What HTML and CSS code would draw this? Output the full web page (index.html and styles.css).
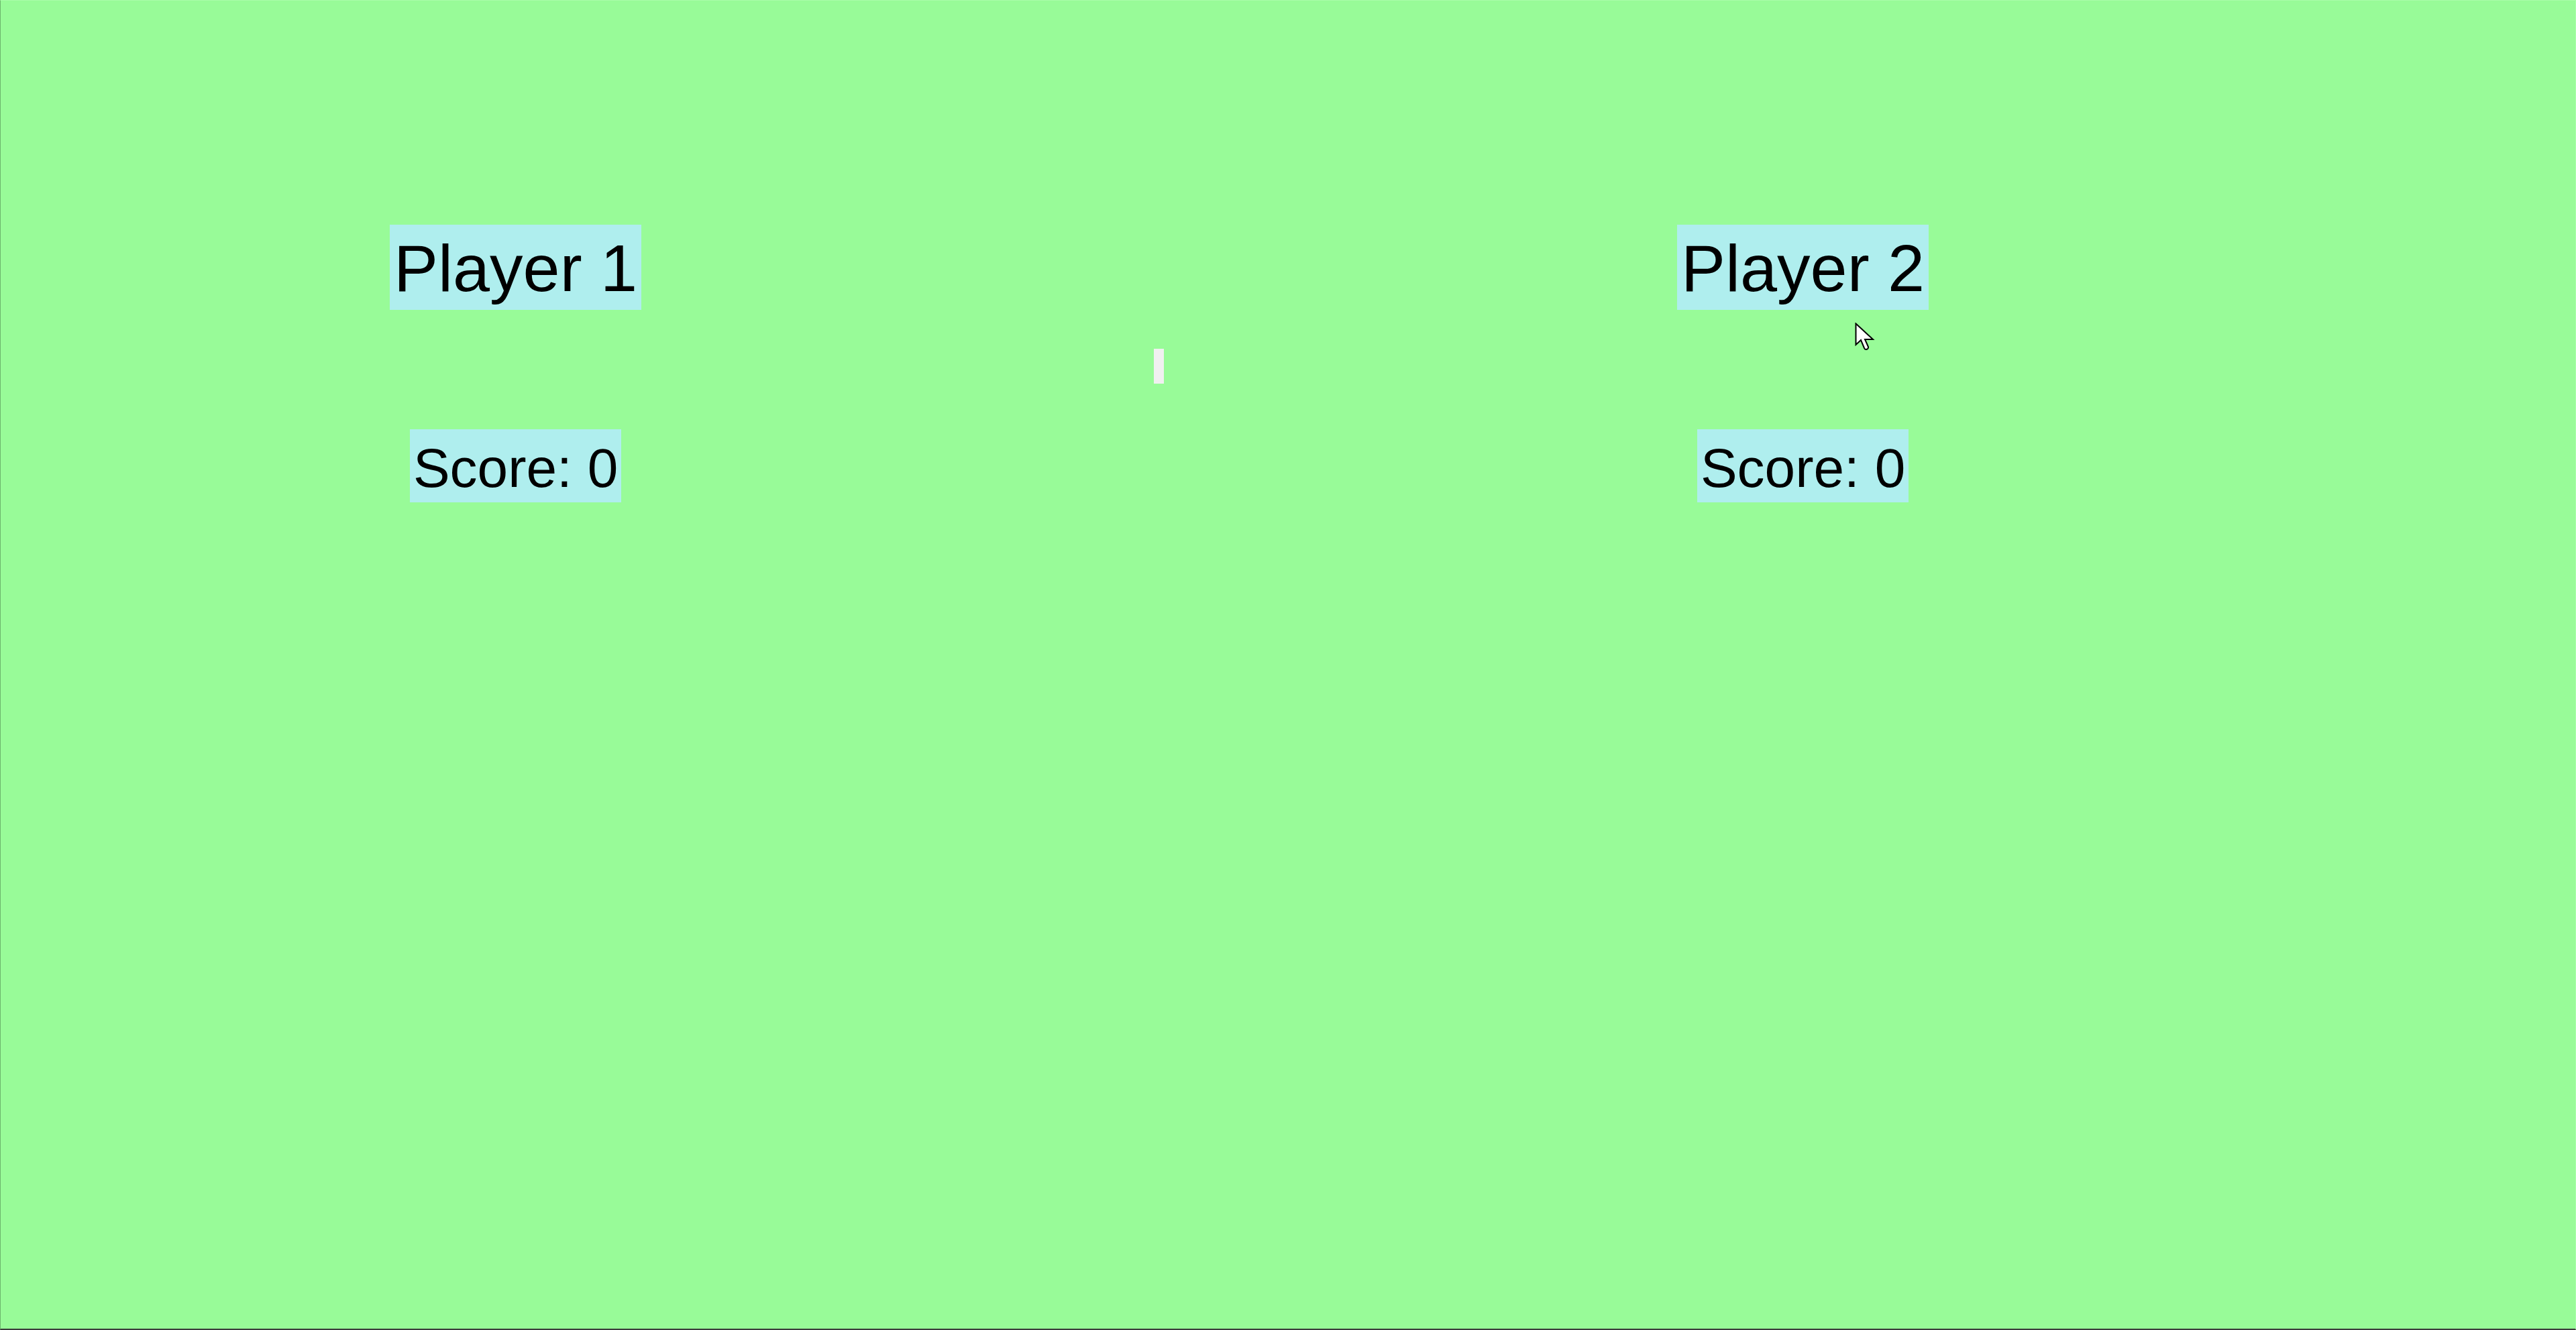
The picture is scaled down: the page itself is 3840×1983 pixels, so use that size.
FILE: index.html
```html
<!DOCTYPE html>
<html lang="en">
<head>
<meta charset="utf-8">
<title>Pong</title>
<link rel="stylesheet" href="styles.css">
</head>
<body>
<div class="screen">
  <div class="boards">
    <section class="half">
      <div class="board">
        <div class="player">Player 1</div>
        <div class="score">Score: 0</div>
      </div>
    </section>
    <section class="half">
      <div class="board">
        <div class="player">Player 2</div>
        <div class="score">Score: 0</div>
      </div>
    </section>
  </div>
  <div class="ball"></div>
  <svg class="cursor" width="30" height="44" viewBox="0 0 30 44" xmlns="http://www.w3.org/2000/svg">
    <path d="M1.5 1.5 L1.5 33 L9 26 L14 38 Q15.5 41 18.5 39.5 Q21 38 19.5 35 L15 25 L27 25 Z" fill="#fff" stroke="#000" stroke-width="2" stroke-linejoin="miter"/>
  </svg>
</div>
</body>
</html>
```

FILE: styles.css
```css
html, body {
  margin: 0;
  padding: 0;
}
body {
  background: #98fb98;
  font-family: "Liberation Sans", Arial, sans-serif;
  color: #000;
}
.screen {
  position: relative;
  box-sizing: border-box;
  height: 100vh;
  border-top: 1px solid #a8fca8;
  border-left: 1px solid #6cb56c;
  border-right: 1px solid #a8fca8;
  border-bottom: 2px solid #3b3b3b;
  overflow: hidden;
}
.boards {
  display: grid;
  grid-template-columns: 1fr 1fr;
}
.half {
  display: flex;
}
.board {
  width: 80%;
  display: flex;
  flex-direction: column;
  align-items: center;
  padding-top: 334px;
  gap: 178px;
}
.player {
  background: #afeeee;
  font-size: 99px;
  line-height: 113px;
  padding: 8px 6px 6px;
}
.score {
  background: #afeeee;
  font-size: 82px;
  line-height: 94px;
  padding: 11px 5px 4px;
}
.ball {
  position: absolute;
  left: 1719px;
  top: 519px;
  width: 15px;
  height: 52px;
  background: #f0f0f0;
}
.cursor {
  position: absolute;
  left: 2764px;
  top: 480px;
}
```
